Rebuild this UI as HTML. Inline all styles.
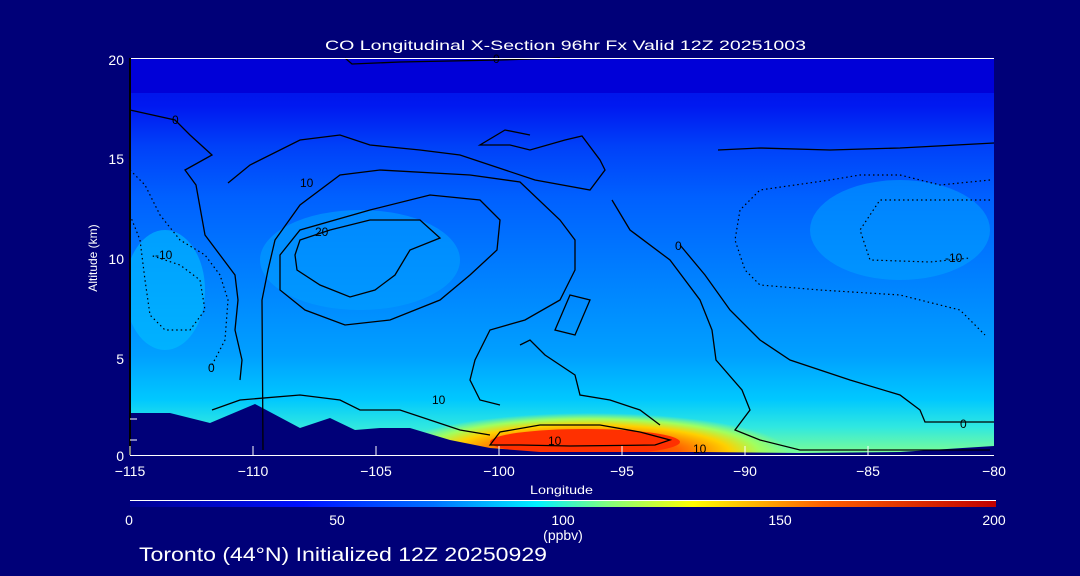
<!DOCTYPE html>
<html><head><style>
body{margin:0;background:#000078;width:1080px;height:576px;overflow:hidden;font-family:"Liberation Sans",sans-serif}
</style></head><body>
<svg width="1080" height="576" xmlns="http://www.w3.org/2000/svg" style="position:absolute;left:0;top:0">
<defs>
<clipPath id="pc"><rect x="130" y="58" width="864" height="397"/></clipPath>
<linearGradient id="bg" x1="0" y1="0" x2="0" y2="1">
<stop offset="0" stop-color="#0010e0"/>
<stop offset="0.12" stop-color="#0018f0"/>
<stop offset="0.22" stop-color="#0040f8"/>
<stop offset="0.35" stop-color="#0060ff"/>
<stop offset="0.55" stop-color="#0080ff"/>
<stop offset="0.75" stop-color="#00a0ff"/>
<stop offset="0.86" stop-color="#00c8ff"/>
<stop offset="0.93" stop-color="#30e8e0"/>
<stop offset="1" stop-color="#80ff90"/>
</linearGradient>
<linearGradient id="cb" x1="0" y1="0" x2="1" y2="0">
<stop offset="0" stop-color="#000090"/>
<stop offset="0.2" stop-color="#0010ff"/>
<stop offset="0.35" stop-color="#0070ff"/>
<stop offset="0.47" stop-color="#00f0ff"/>
<stop offset="0.55" stop-color="#80ff80"/>
<stop offset="0.65" stop-color="#ffff00"/>
<stop offset="0.8" stop-color="#ff6000"/>
<stop offset="1" stop-color="#c00000"/>
</linearGradient>
<radialGradient id="hot" cx="0.5" cy="0.6" r="0.5">
<stop offset="0" stop-color="#ff2000"/>
<stop offset="0.45" stop-color="#ff6000"/>
<stop offset="0.7" stop-color="#ffd000"/>
<stop offset="0.85" stop-color="#a0ff60"/>
<stop offset="1" stop-color="#a0ff60" stop-opacity="0"/>
</radialGradient>
</defs>
<g clip-path="url(#pc)">
<rect x="130" y="58" width="864" height="397" fill="url(#bg)"/>
<rect x="130" y="58" width="864" height="35" fill="#0000d8"/>
<ellipse cx="360" cy="260" rx="100" ry="50" fill="#00a0ff" opacity="0.6"/>
<ellipse cx="900" cy="230" rx="90" ry="50" fill="#00a8ff" opacity="0.5"/>
<ellipse cx="165" cy="290" rx="40" ry="60" fill="#00c0ff" opacity="0.6"/>
<ellipse cx="590" cy="445" rx="200" ry="40" fill="url(#hot)"/>
<ellipse cx="585" cy="442" rx="95" ry="13" fill="#ff3000"/>
<polygon fill="#000078" points="130,455 130,413 170,413 210,423 255,404 300,428 330,418 355,430 380,428 410,428 450,440 490,448 540,452 700,452 800,453 900,452 994,446 994,455"/>
</g>
<g fill="none" stroke="#000" stroke-width="1.3">
<path d="M345,58 L352,64 L400,62 L500,60 L560,58"/>
<path d="M130,110 L175,120 L190,135 L212,155 L185,170 L196,185 L205,235 L220,255 L235,275 L238,300 L235,330 L242,360 L240,380"/>
<path d="M263,450 L262,300 L268,270 L275,240 L300,205 L340,175 L380,170 L470,175 L520,182 L560,220 L575,240 L575,270 L560,300 L525,320 L490,330 L475,360 L470,380 L480,400 L500,405"/>
<path d="M280,255 L300,230 L370,210 L430,195 L480,200 L500,220 L497,250 L470,275 L440,300 L390,320 L345,325 L305,310 L280,290 Z"/>
<path d="M295,255 L300,240 L330,230 L370,220 L420,220 L440,238 L410,250 L395,275 L375,290 L350,297 L320,285 L297,270 Z"/>
<path d="M228,183 L250,165 L300,140 L340,135 L370,145 L420,150 L460,155 L490,165 L535,180 L590,190 L605,170 L600,160 L582,136 L565,140 L530,150 L510,145 L480,145 L505,130 L530,135"/>
<path d="M612,200 L630,230 L670,260 L700,300 L712,330 L716,360 L742,390 L750,410 L735,430 L760,440 L800,450 L990,450"/>
<path d="M718,150 L760,148 L830,150 L900,148 L994,143"/>
<path d="M680,245 L705,275 L730,310 L760,340 L790,360 L850,380 L900,395 L920,410 L925,422 L994,422"/>
<path d="M490,445 L500,432 L540,425 L600,425 L640,432 L670,440 L655,445 L570,446 L520,445 Z"/>
<path d="M555,330 L570,295 L590,300 L575,335 Z"/>
<path d="M212,410 L240,400 L300,395 L340,400 L360,410 L400,410 L430,420 L460,430 L490,435"/>
<path d="M520,345 L530,340 L545,355 L575,375 L580,395 L610,400 L640,410 L660,425"/>
</g>
<g fill="none" stroke="#000" stroke-width="1.2" stroke-dasharray="1.5,3">
<path d="M130,170 L145,185 L160,215 L180,240 L205,255 L220,275 L228,300 L225,340 L212,365"/>
<path d="M130,215 L140,240 L145,280 L150,315 L165,330 L190,330 L205,310 L200,280 L180,265 L150,255"/>
<path d="M990,180 L940,185 L900,175 L860,175 L830,180 L760,190 L740,210 L735,240 L745,270 L760,285 L820,290 L900,295 L960,310 L985,335"/>
<path d="M990,200 L930,200 L880,200 L860,230 L870,260 L930,262 L970,258"/>
</g>
<g font-size="12" fill="#000" font-family="Liberation Sans,sans-serif">
<text x="172" y="124">0</text><text x="300" y="187">10</text><text x="315" y="236">20</text>
<text x="155" y="259">-10</text><text x="432" y="404">10</text><text x="548" y="445">10</text>
<text x="693" y="453">10</text><text x="675" y="250">0</text><text x="208" y="372">0</text>
<text x="945" y="262">-10</text><text x="960" y="428">0</text><text x="493" y="63">0</text>
</g>
<line x1="130" y1="58.5" x2="994" y2="58.5" stroke="#fff"/>
<line x1="130" y1="58" x2="130" y2="455" stroke="#000" stroke-width="2"/>
<line x1="130" y1="455.5" x2="994" y2="455.5" stroke="#fff"/>
<g stroke="#fff">
<line x1="130" y1="455" x2="130" y2="446"/><line x1="253" y1="455" x2="253" y2="446"/><line x1="376" y1="455" x2="376" y2="446"/><line x1="499" y1="455" x2="499" y2="446"/><line x1="622" y1="455" x2="622" y2="446"/><line x1="745" y1="455" x2="745" y2="446"/><line x1="868" y1="455" x2="868" y2="446"/>
<line x1="130" y1="419" x2="137" y2="419"/><line x1="130" y1="440" x2="137" y2="440"/>
</g>
<g fill="#fff" font-size="14">
<text x="325" y="50" textLength="481" lengthAdjust="spacingAndGlyphs">CO Longitudinal X-Section 96hr  Fx Valid 12Z 20251003</text>
<text x="124" y="65" text-anchor="end">20</text><text x="124" y="164" text-anchor="end">15</text>
<text x="124" y="264" text-anchor="end">10</text><text x="124" y="364" text-anchor="end">5</text>
<text x="124" y="461" text-anchor="end">0</text>
<text x="97" y="258" text-anchor="middle" transform="rotate(-90 97 258)" font-size="12">Altitude (km)</text>
<text x="130" y="476" text-anchor="middle">−115</text><text x="253" y="476" text-anchor="middle">−110</text>
<text x="376" y="476" text-anchor="middle">−105</text><text x="499" y="476" text-anchor="middle">−100</text>
<text x="622" y="476" text-anchor="middle">−95</text><text x="745" y="476" text-anchor="middle">−90</text>
<text x="868" y="476" text-anchor="middle">−85</text><text x="994" y="476" text-anchor="middle">−80</text>
<text x="530" y="494" font-size="12" textLength="63" lengthAdjust="spacingAndGlyphs">Longitude</text>
<text x="129" y="525" text-anchor="middle">0</text><text x="337" y="525" text-anchor="middle">50</text>
<text x="563" y="525" text-anchor="middle">100</text><text x="780" y="525" text-anchor="middle">150</text>
<text x="994" y="525" text-anchor="middle">200</text>
<text x="563" y="540" text-anchor="middle">(ppbv)</text>
<text x="139" y="561" font-size="19" textLength="408" lengthAdjust="spacingAndGlyphs">Toronto (44°N) Initialized 12Z 20250929</text>
</g>
<line x1="130" y1="500.5" x2="996" y2="500.5" stroke="#fff"/>
<rect x="130" y="501" width="866" height="6" fill="url(#cb)"/>
</svg>
</body></html>
